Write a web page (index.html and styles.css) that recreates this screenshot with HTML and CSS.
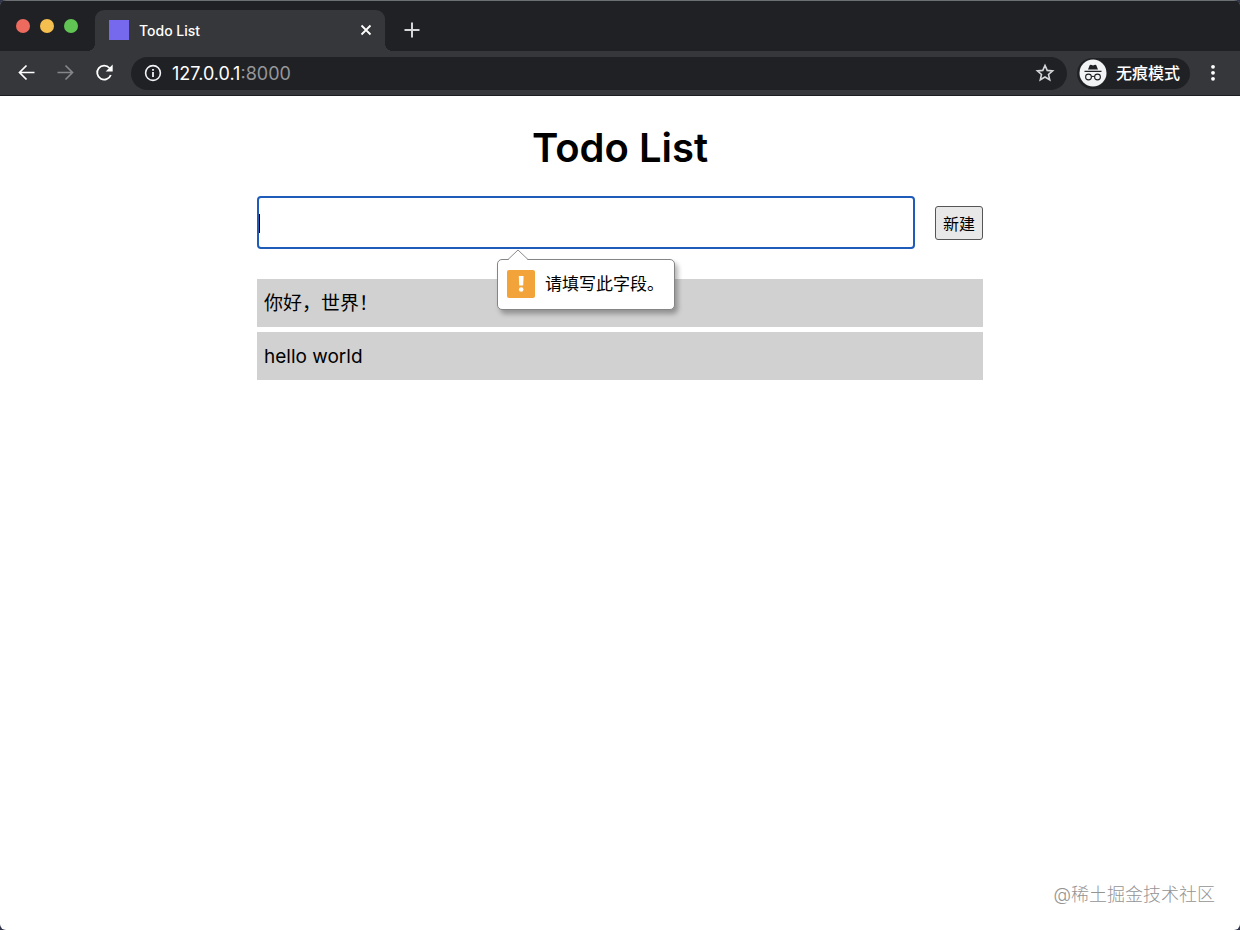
FILE: index.html
```html
<!DOCTYPE html>
<html lang="zh-CN">
<head>
<meta charset="utf-8">
<title>Todo List</title>
<link rel="stylesheet" href="styles.css">
</head>
<body>
<div class="window">
  <header class="browser">
    <div class="tab-strip">
      <div class="lights">
        <span class="light light-close"></span>
        <span class="light light-min"></span>
        <span class="light light-max"></span>
      </div>
      <div class="tab">
        <span class="favicon"></span>
        <span class="tab-title">Todo List</span>
        <button class="icon-btn" type="button" aria-label="关闭标签页">
          <svg width="12" height="12" viewBox="0 0 12 12"><path d="M1.500 1.500l9 9M10.500 1.500l-9 9" fill="none" stroke="#fff" stroke-width="1.800"/></svg>
        </button>
      </div>
      <button class="icon-btn new-tab" type="button" aria-label="新标签页">
        <svg width="16" height="16" viewBox="0 0 16 16"><path d="M8 .5v15M.5 8h15" fill="none" stroke="#d5d6d8" stroke-width="2"/></svg>
      </button>
    </div>
    <div class="toolbar">
      <button class="icon-btn" type="button" aria-label="后退">
        <svg width="20" height="20" viewBox="0 0 20 20"><path d="M17.500 9.500H2.500M9.500 2.500l-7 7 7 7" fill="none" stroke="#fff" stroke-width="1.700"/></svg>
      </button>
      <button class="icon-btn" type="button" aria-label="前进">
        <svg width="20" height="20" viewBox="0 0 20 20"><path d="M1.500 9.500h15M9.500 2.500l7 7-7 7" fill="none" stroke="#85868a" stroke-width="1.700"/></svg>
      </button>
      <button class="icon-btn" type="button" aria-label="重新加载">
        <svg width="20" height="20" viewBox="0 0 20 20"><path d="M15.800 12A7 7 0 1 1 14.500 5" fill="none" stroke="#fff" stroke-width="1.800"/><path d="M17.700 1.500v7h-7z" fill="#fff"/></svg>
      </button>
      <div class="address">
        <svg width="18" height="18" viewBox="0 0 18 18"><circle cx="9" cy="9" r="7.400" fill="none" stroke="#f1f3f4" stroke-width="1.600"/><path d="M9 8v5M9 5v1.800" stroke="#f1f3f4" stroke-width="1.800"/></svg>
        <span class="url">127.0.0.1<span class="port">:8000</span></span>
        <button class="icon-btn" type="button" aria-label="收藏">
          <svg width="20" height="20" viewBox="0 0 20 20"><path d="M10 2.400l2.200 5 5.400.500-4.100 3.600 1.200 5.300L10 14l-4.700 2.800 1.200-5.300L2.400 7.900l5.400-.500z" fill="none" stroke="#d5d6d8" stroke-width="1.600"/></svg>
        </button>
      </div>
      <button class="incognito" type="button">
        <svg width="28" height="28" viewBox="0 0 28 28"><circle cx="14" cy="14" r="13.500" fill="#f1f3f4"/><path d="M5.500 11.700h17v1.300h-17zM9 10.600l1.700-4.300c.2-.5.700-.7 1.200-.5l2.100.7 2.100-.7c.5-.2 1 0 1.200.5l1.700 4.300z" fill="#202124"/><g fill="none" stroke="#202124" stroke-width="1.100"><circle cx="9.500" cy="18" r="2.900"/><circle cx="18.500" cy="18" r="2.900"/><path d="M12.400 17.700q1.600-.8 3.200 0"/></g></svg>
        <span>无痕模式</span>
      </button>
      <button class="icon-btn" type="button" aria-label="菜单">
        <svg width="20" height="20" viewBox="0 0 20 20" fill="#fff"><circle cx="10" cy="3.800" r="1.900"/><circle cx="10" cy="9.800" r="1.900"/><circle cx="10" cy="15.800" r="1.900"/></svg>
      </button>
    </div>
  </header>
  <main class="page">
    <h1 class="title">Todo List</h1>
    <form class="todo-form">
      <div class="field">
        <input class="todo-input" type="text" aria-label="待办事项" required>
        <span class="caret"></span>
        <div class="bubble" role="alert">
          <svg class="bubble-arrow" width="22" height="11" viewBox="0 0 22 11"><path d="M1 11L11 1l10 10z" fill="#fff"/><path d="M1 10.500L11 1l10 9.500" fill="none" stroke="#8a8a8a"/></svg>
          <svg width="28" height="28" viewBox="0 0 28 28"><rect width="28" height="28" rx="2" fill="#f2a33a"/><path d="M11.800 6h4.800l-.4 9.500h-4z" fill="#fff"/><circle cx="14.200" cy="19.500" r="2.300" fill="#fff"/></svg>
          <span>请填写此字段。</span>
        </div>
      </div>
      <button class="create" type="submit">新建</button>
    </form>
    <ul class="todos">
      <li class="todo">你好，世界！</li>
      <li class="todo">hello world</li>
    </ul>
  </main>
  <footer class="watermark">@稀土掘金技术社区</footer>
</div>
</body>
</html>
```
FILE: styles.css
```css
* { box-sizing: border-box; }

body {
  margin: 0;
  background: #30344c;
  color: #000;
  font-family: Inter, "Noto Sans CJK SC", sans-serif;
}

button, input { font: inherit; }

svg { display: block; flex: none; }

.window {
  display: flex;
  flex-direction: column;
  min-height: 100vh;
  border-radius: 6px;
  background: #fff;
  overflow: hidden;
}

.icon-btn {
  flex: none;
  padding: 0;
  border: 0;
  background: none;
}

.browser {
  border-bottom: 1px solid #1c1d20;
  background: #36373b;
  color: #fff;
}

.tab-strip {
  display: flex;
  align-items: center;
  height: 51px;
  padding-left: 16px;
  border-top: 1px solid #6d7073;
  background: #202124;
}

.lights {
  display: flex;
  gap: 10px;
  width: 79px;
}

.light {
  width: 14px;
  height: 14px;
  border-radius: 50%;
}

.light-close { background: #ed6a5e; }
.light-min { background: #f5bf4f; }
.light-max { background: #61c554; }

.tab {
  position: relative;
  display: flex;
  align-self: flex-end;
  align-items: center;
  gap: 10px;
  width: 290px;
  height: 41px;
  padding: 0 13px 1px 14px;
  border-radius: 9px 9px 0 0;
  background: #36373b;
}

.tab::before,
.tab::after {
  content: "";
  position: absolute;
  bottom: 0;
  width: 8px;
  height: 8px;
}

.tab::before {
  right: 100%;
  background: radial-gradient(circle at 0 0, #202124 8px, #36373b 8px);
}

.tab::after {
  left: 100%;
  background: radial-gradient(circle at 100% 0, #202124 8px, #36373b 8px);
}

.favicon {
  width: 20px;
  height: 20px;
  background: #7669ed;
}

.tab-title {
  flex: 1;
  font-size: 14px;
  font-weight: 500;
}

.new-tab {
  margin-top: 8px;
  margin-left: 19px;
}

.toolbar {
  display: flex;
  align-items: center;
  gap: 19px;
  height: 44px;
  padding: 0 17px;
}

.address {
  display: flex;
  flex: 1;
  align-items: center;
  gap: 10px;
  height: 33px;
  padding: 0 12px 0 13px;
  margin: 0 -3px;
  border-radius: 17px;
  background: #202124;
}

.url {
  flex: 1;
  font-size: 18px;
  font-weight: 400;
}

.port { color: #96979a; }

.incognito {
  display: flex;
  align-items: center;
  gap: 9px;
  height: 31px;
  padding: 0 10px 0 2px;
  margin: 0 -6px;
  border: 0;
  border-radius: 16px;
  background: #202124;
  color: #fff;
  font-size: 16px;
  font-weight: 500;
  line-height: 20px;
}

.page {
  flex: 1;
  width: 100%;
  max-width: 766px;
  padding: 28px 20px 0;
  margin: 0 auto;
}

.title {
  margin: 0 0 24px;
  font-size: 40px;
  font-weight: 600;
  line-height: 48px;
  text-align: center;
}

.todo-form {
  display: flex;
  align-items: center;
  gap: 20px;
}

.field {
  position: relative;
  flex: 1;
}

.todo-input {
  display: block;
  width: 100%;
  height: 53px;
  padding: 0 1px;
  border: 2px solid #1f5bb8;
  border-radius: 4px;
  outline: 0;
  background: #fff;
  font-size: 19px;
}

.caret {
  position: absolute;
  top: 18px;
  left: 2px;
  width: 1px;
  height: 19px;
  background: #000;
}

.bubble {
  position: absolute;
  top: 63px;
  left: 240px;
  display: flex;
  align-items: center;
  gap: 10px;
  height: 51px;
  padding: 0 10px 2px 9px;
  border: 1px solid #858585;
  border-radius: 5px;
  background: #fff;
  box-shadow: 3px 4px 5px rgba(0, 0, 0, .3);
  font-size: 17px;
  line-height: 24px;
  white-space: nowrap;
}

.bubble-arrow {
  position: absolute;
  bottom: 100%;
  left: 9px;
}

.create {
  width: 48px;
  height: 34px;
  padding: 0;
  border: 1px solid #555;
  border-radius: 3px;
  background: #e8e8e8;
  color: #000;
  font-size: 16px;
}

.todos {
  display: grid;
  gap: 5px;
  padding: 0;
  margin: 30px 0 0;
  list-style: none;
}

.todo {
  padding: 11px 7px 9px;
  background: #d1d1d1;
  font-size: 19px;
  line-height: 28px;
}

.watermark {
  padding: 0 25px 22px;
  color: #949494;
  font-size: 18px;
  font-weight: 300;
  line-height: 26px;
  text-align: right;
}
```
